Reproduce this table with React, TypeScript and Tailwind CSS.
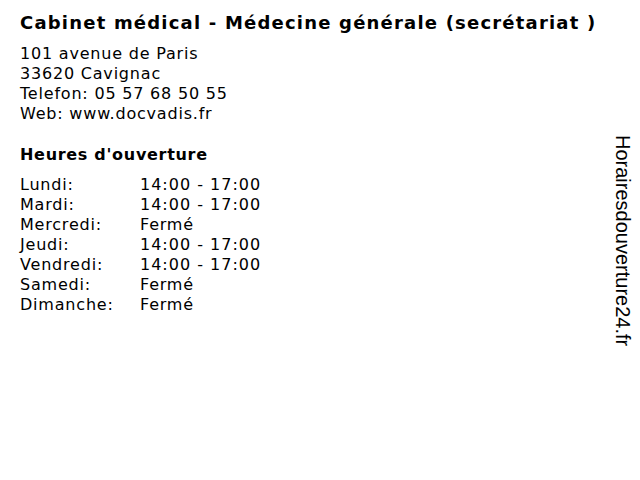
const hours = [
  { day: 'Lundi:', time: '14:00 - 17:00' },
  { day: 'Mardi:', time: '14:00 - 17:00' },
  { day: 'Mercredi:', time: 'Fermé' },
  { day: 'Jeudi:', time: '14:00 - 17:00' },
  { day: 'Vendredi:', time: '14:00 - 17:00' },
  { day: 'Samedi:', time: 'Fermé' },
  { day: 'Dimanche:', time: 'Fermé' },
];

export default function App() {
  return (
    <div className="w-[640px] h-[480px] bg-white flex text-black font-['DejaVu_Sans',sans-serif]">
      <div className="flex-1 pl-5 pt-[10px]">
        <h1 className="text-[18px] leading-[26px] font-bold tracking-[1.2px]">
          Cabinet médical - Médecine générale (secrétariat )
        </h1>
        <div className="mt-[8px] text-[16px] leading-5 tracking-[0.8px]">
          <div>101 avenue de Paris</div>
          <div>33620 Cavignac</div>
          <div>Telefon: 05 57 68 50 55</div>
          <div>Web: www.docvadis.fr</div>
        </div>
        <h2 className="mt-[21px] text-[16px] leading-5 font-bold tracking-[0.7px]">Heures d'ouverture</h2>
        <div className="mt-[10px] text-[16px] leading-5 tracking-[0.8px]">
          {hours.map((h) => (
            <div key={h.day} className="flex">
              <span className="w-[120px]">{h.day}</span>
              <span className={h.time === 'Fermé' ? '' : 'tracking-[1px]'}>{h.time}</span>
            </div>
          ))}
        </div>
      </div>
      <div className="w-[40px] flex justify-center pt-[135px]">
        <span className="ml-[6px] [writing-mode:vertical-rl] font-['Liberation_Sans',sans-serif] text-[20px] leading-5">
          Horairesdouverture24.fr
        </span>
      </div>
    </div>
  );
}
